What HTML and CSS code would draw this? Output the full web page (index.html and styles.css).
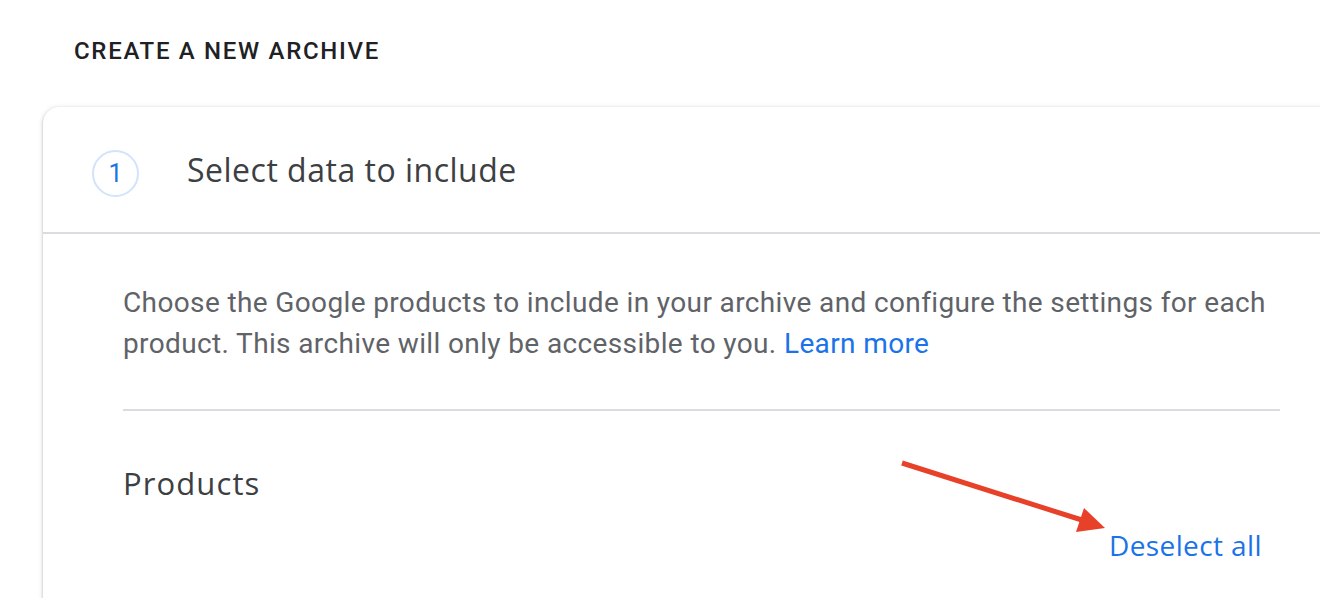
FILE: index.html
```html
<!DOCTYPE html>
<html>
<head>
<meta charset="utf-8">
<link rel="stylesheet" href="styles.css">
</head>
<body>
<div class="page">
  <h1 class="page-title">CREATE A NEW ARCHIVE</h1>
  <section class="card">
    <header class="step-header">
      <div class="step-num">1</div>
      <h2 class="step-title">Select data to include</h2>
    </header>
    <div class="step-body">
      <p class="intro">Choose the Google products to include in your archive and configure the settings for each product. This archive will only be accessible to you. <a class="link" href="#">Learn more</a></p>
      <hr class="divider">
      <div class="products-row">
        <h3 class="products-title">Products</h3>
      </div>
      <div class="actions">
        <a class="link deselect" href="#">Deselect all</a>
      </div>
    </div>
  </section>
  <svg class="annot-arrow" width="230" height="90" viewBox="0 0 230 90">
    <line x1="2" y1="4" x2="185" y2="62" stroke="#e8412a" stroke-width="5" stroke-linecap="butt"/>
    <polygon points="205,69 184,49 176,73" fill="#e8412a"/>
  </svg>
</div>
</body>
</html>
```
FILE: styles.css
```css
html, body {
  margin: 0;
  padding: 0;
  background: #ffffff;
  overflow: hidden;
}
.page {
  position: relative;
  width: 1320px;
  height: 598px;
  overflow: hidden;
}
.page-title {
  margin: 0;
  padding: 37px 0 0 74px;
  height: 107px;
  box-sizing: border-box;
  font-family: Roboto, "Liberation Sans", sans-serif;
  font-weight: 500;
  font-size: 24px;
  line-height: 28px;
  letter-spacing: 1.7px;
  color: #202124;
}
.card {
  margin-left: 43px;
  width: 1330px;
  height: 560px;
  background: #fff;
  border-radius: 16px 16px 0 0;
  box-shadow: 0 1px 2px rgba(60,64,67,.3), 0 1px 4px 1px rgba(60,64,67,.15);
}
.step-header {
  display: flex;
  align-items: center;
  height: 127px;
  padding: 0 0 0 49px;
  box-sizing: border-box;
  border-bottom: 2px solid #dadce0;
}
.step-num {
  width: 47px;
  height: 47px;
  box-sizing: border-box;
  border: 2px solid #d2e3fc;
  border-radius: 50%;
  display: flex;
  align-items: center;
  justify-content: center;
  font-family: Roboto, "Liberation Sans", sans-serif;
  font-size: 25px;
  color: #1a73e8;
  margin-top: 7px;
}
.step-title {
  margin: 0 0 0 48px;
  font-family: "Open Sans", Roboto, sans-serif;
  font-weight: 500;
  font-size: 32px;
  color: #3c4043;
  letter-spacing: 0.5px;
}
.step-body {
  padding: 48px 0 0 80px;
  width: 1157px;
}
.intro {
  margin: 0;
  font-family: Roboto, "Liberation Sans", sans-serif;
  font-size: 28px;
  line-height: 41px;
  color: #5f6368;
  letter-spacing: 0.37px;
}
.link {
  color: #1a73e8;
  text-decoration: none;
}
.divider {
  margin: 45px 0 0 0;
  border: 0;
  border-top: 2px solid #dadce0;
  height: 0;
}
.products-row {
  padding-top: 52px;
}
.products-title {
  margin: 0;
  font-family: "Open Sans", Roboto, sans-serif;
  font-weight: 500;
  font-size: 31px;
  line-height: 40px;
  color: #3c4043;
  letter-spacing: 1.1px;
}
.actions {
  display: flex;
  justify-content: flex-end;
  padding: 22px 18px 0 0;
}
.deselect {
  font-family: "Open Sans", Roboto, sans-serif;
  font-weight: 500;
  font-size: 28px;
  line-height: 40px;
  letter-spacing: 0.4px;
}
.annot-arrow {
  position: absolute;
  left: 900px;
  top: 459px;
}
```
